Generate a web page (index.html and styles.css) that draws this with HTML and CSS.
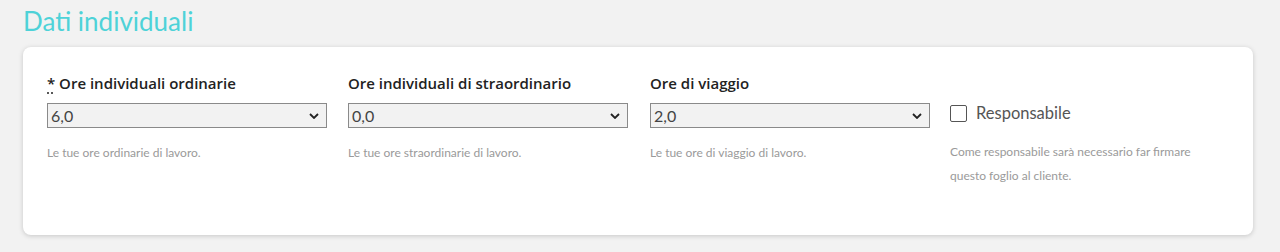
FILE: index.html
```html
<!DOCTYPE html>
<html lang="it">
<head>
<meta charset="utf-8">
<link rel="stylesheet" href="styles.css">
</head>
<body>
<h2 class="title">Dati individuali</h2>
<div class="card">
  <div class="field">
    <label class="label"><abbr class="req" title="obbligatorio">*</abbr> Ore individuali ordinarie</label>
    <div class="select"><span>6,0</span><svg class="chev" viewBox="0 0 10 6" width="10" height="6"><path d="M1 1 L5 5 L9 1" fill="none" stroke="#222" stroke-width="1.8"/></svg></div>
    <p class="help">Le tue ore ordinarie di lavoro.</p>
  </div>
  <div class="field">
    <label class="label">Ore individuali di straordinario</label>
    <div class="select"><span>0,0</span><svg class="chev" viewBox="0 0 10 6" width="10" height="6"><path d="M1 1 L5 5 L9 1" fill="none" stroke="#222" stroke-width="1.8"/></svg></div>
    <p class="help">Le tue ore straordinarie di lavoro.</p>
  </div>
  <div class="field">
    <label class="label">Ore di viaggio</label>
    <div class="select"><span>2,0</span><svg class="chev" viewBox="0 0 10 6" width="10" height="6"><path d="M1 1 L5 5 L9 1" fill="none" stroke="#222" stroke-width="1.8"/></svg></div>
    <p class="help">Le tue ore di viaggio di lavoro.</p>
  </div>
  <div class="field check-field">
    <div class="check-row"><span class="box"></span><span class="check-label">Responsabile</span></div>
    <p class="help">Come responsabile sarà necessario far firmare questo foglio al cliente.</p>
  </div>
</div>
</body>
</html>
```
FILE: styles.css
```css
html, body { margin: 0; padding: 0; }
body {
  background: #f2f2f2;
  width: 1280px;
  height: 252px;
  overflow: hidden;
  font-family: "Lato", "Noto Sans", sans-serif;
}
.title {
  margin: 0;
  padding: 6px 0 0 23px;
  height: 40px;
  box-sizing: border-box;
  font-weight: 400;
  font-size: 26px;
  line-height: 30px;
  color: #4ed2d8;
  font-family: "Lato", sans-serif;
}
.card {
  margin: 7px 27px 0 23px;
  background: #fff;
  border-radius: 8px;
  box-shadow: 0 1px 5px rgba(0,0,0,0.18);
  padding: 26px 24px 0 24px;
  height: 188px;
  box-sizing: border-box;
  display: grid;
  grid-template-columns: 301px 302px 300px 270px;
  align-items: start;
}
.field { display: flex; flex-direction: column; }
.label {
  font-family: "Open Sans", sans-serif;
  font-weight: 600;
  font-size: 15px;
  line-height: 20px;
  color: #222;
  margin-bottom: 10px;
}
.req { text-decoration: underline dotted; text-underline-offset: 4px; }
.select {
  width: 280px;
  height: 25px;
  box-sizing: border-box;
  border: 1px solid #8a8a8a;
  background: #f2f2f2;
  display: flex;
  align-items: center;
  justify-content: space-between;
  padding: 0 7px 0 3px;
  font-family: "Lato", sans-serif;
  font-size: 16px;
  color: #444;
}
.chev { display: block; }
.help {
  margin: 13px 0 0;
  font-family: "Lato", sans-serif;
  font-size: 12px;
  line-height: 24px;
  color: #9a9a9a;
}
.check-field { padding-top: 30px; }
.check-row { display: flex; align-items: center; height: 20px; }
.box {
  width: 15px;
  height: 15px;
  border: 1px solid #555;
  border-radius: 2px;
  margin-right: 9px;
  background: #fff;
}
.check-label {
  font-family: "Lato", sans-serif;
  font-size: 16.5px;
  color: #555;
}
.check-field .help { margin-top: 17px; max-width: 258px; }
```
